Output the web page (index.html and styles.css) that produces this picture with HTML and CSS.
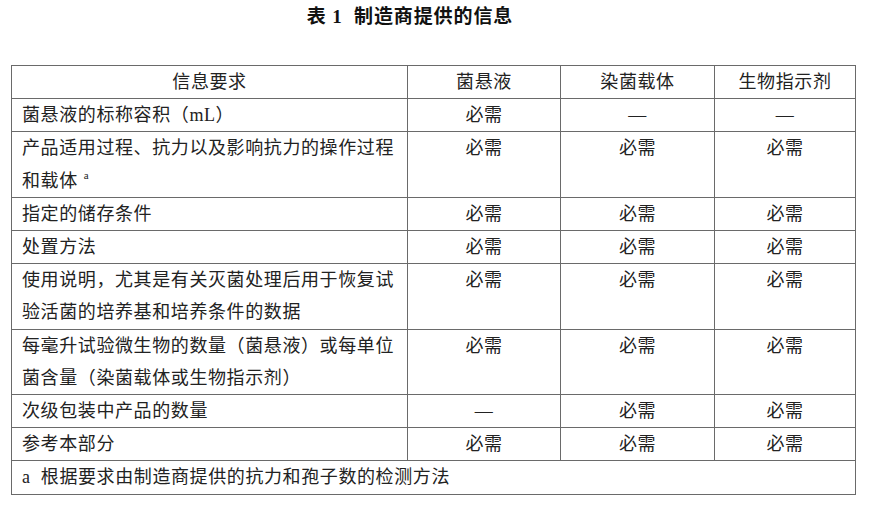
FILE: index.html
```html
<!DOCTYPE html>
<html lang="zh">
<head>
<meta charset="utf-8">
<title>表 1 制造商提供的信息</title>
<link rel="stylesheet" href="styles.css">
</head>
<body>
<div class="page">
  <h1 class="caption">表 1&nbsp; 制造商提供的信息</h1>
  <table class="info">
    <colgroup>
      <col class="c-req"><col class="c-a"><col class="c-b"><col class="c-c">
    </colgroup>
    <thead>
      <tr><th>信息要求</th><th>菌悬液</th><th>染菌载体</th><th>生物指示剂</th></tr>
    </thead>
    <tbody>
      <tr><td class="req">菌悬液的标称容积（mL）</td><td>必需</td><td>—</td><td>—</td></tr>
      <tr><td class="req">产品适用过程、抗力以及影响抗力的操作过程<br><span>和载体</span><sup class="fn">a</sup></td><td>必需</td><td>必需</td><td>必需</td></tr>
      <tr><td class="req">指定的储存条件</td><td>必需</td><td>必需</td><td>必需</td></tr>
      <tr><td class="req">处置方法</td><td>必需</td><td>必需</td><td>必需</td></tr>
      <tr><td class="req">使用说明，尤其是有关灭菌处理后用于恢复试验活菌的培养基和培养条件的数据</td><td>必需</td><td>必需</td><td>必需</td></tr>
      <tr><td class="req">每毫升试验微生物的数量（菌悬液）或每单位菌含量（染菌载体或生物指示剂）</td><td>必需</td><td>必需</td><td>必需</td></tr>
      <tr><td class="req">次级包装中产品的数量</td><td>—</td><td>必需</td><td>必需</td></tr>
      <tr><td class="req">参考本部分</td><td>必需</td><td>必需</td><td>必需</td></tr>
      <tr><td class="note" colspan="4">a&nbsp; 根据要求由制造商提供的抗力和孢子数的检测方法</td></tr>
    </tbody>
  </table>
</div>
</body>
</html>
```

FILE: styles.css
```css
html, body {
  margin: 0;
  padding: 0;
  background: #ffffff;
}

body {
  font-family: "Liberation Serif", "Noto Sans CJK SC", serif;
  color: #222222;
}

.page {
  padding: 4px 0 0 11px;
}

.caption {
  width: 798px;
  margin: 0 0 35px 0;
  font-size: 19px;
  line-height: 26px;
  font-weight: 700;
  text-align: center;
  letter-spacing: 0.9px;
  color: #111;
}

.info {
  border-collapse: collapse;
  table-layout: fixed;
  width: 844px;
  font-size: 18px;
  letter-spacing: 0.6px;
}

.c-req { width: 396px; }
.c-a { width: 153px; }
.c-b { width: 154px; }
.c-c { width: 141px; }

.info th,
.info td {
  border: 1px solid #6a6a6a;
  font-weight: 400;
  line-height: 32.2px;
  padding: 0 6px;
  text-align: center;
  vertical-align: top;
}

.info td.req,
.info td.note {
  text-align: left;
  padding-left: 10px;
}

.info .fn {
  display: inline-block;
  font-size: 11px;
  line-height: 11px;
  margin-left: 6px;
  vertical-align: 8px;
  letter-spacing: 0;
}
```
